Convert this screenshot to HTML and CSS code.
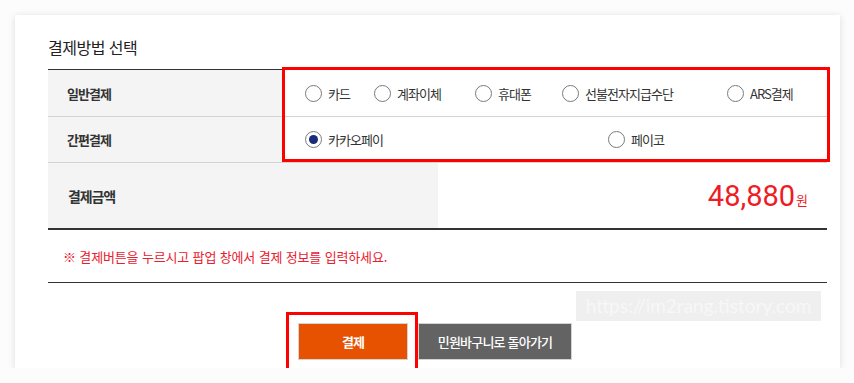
FILE: index.html
```html
<!DOCTYPE html>
<html lang="ko">
<head>
<meta charset="utf-8">
<title>결제방법 선택</title>
<link rel="stylesheet" href="styles.css">
</head>
<body>
<div class="card">
  <h2 class="title">결제방법 선택</h2>
  <div class="method">
    <div class="mrow mrow-first">
      <div class="mlabel">일반결제</div>
      <div class="mopts opts-general">
        <label class="opt"><span class="radio"></span><span class="opt-text">카드</span></label>
        <label class="opt"><span class="radio"></span><span class="opt-text">계좌이체</span></label>
        <label class="opt"><span class="radio"></span><span class="opt-text">휴대폰</span></label>
        <label class="opt"><span class="radio"></span><span class="opt-text">선불전자지급수단</span></label>
        <label class="opt"><span class="radio"></span><span class="opt-text">ARS결제</span></label>
      </div>
    </div>
    <div class="mrow">
      <div class="mlabel">간편결제</div>
      <div class="mopts opts-easy">
        <label class="opt"><span class="radio radio-on"></span><span class="opt-text">카카오페이</span></label>
        <label class="opt"><span class="radio"></span><span class="opt-text">페이코</span></label>
      </div>
    </div>
  </div>
  <div class="amount">
    <div class="alabel">결제금액</div>
    <div class="avalue"><span class="num">48,880</span><span class="won">원</span></div>
  </div>
  <p class="notice">※ 결제버튼을 누르시고 팝업 창에서 결제 정보를 입력하세요.</p>
  <div class="actions">
    <button class="btn btn-pay">결제</button>
    <button class="btn btn-back">민원바구니로 돌아가기</button>
  </div>
  <div class="watermark">https://im2rang.tistory.com</div>
  <div class="mark mark-opts"></div>
  <div class="mark mark-pay"></div>
</div>
</body>
</html>
```
FILE: styles.css
```css
* { box-sizing: border-box; }
html, body { margin: 0; padding: 0; }
body {
  background: #fcfcfc;
  font-family: "Noto Sans CJK KR", "Noto Sans", sans-serif;
  color: #333;
}
.card {
  position: relative;
  margin: 15px 0 0 15px;
  width: 825px;
  height: 353px;
  padding: 21px 13px 0 33px;
  background: #fff;
  box-shadow: 0 1px 7px rgba(0, 0, 0, 0.13);
  overflow: hidden;
}
.title {
  margin: 0 0 11px;
  font-size: 16px;
  line-height: 22px;
  font-weight: 400;
  color: #222;
  letter-spacing: -0.5px;
}
.method { border-top: 1px solid #333; }
.mrow {
  display: grid;
  grid-template-columns: 235px 1fr;
  height: 46px;
  border-bottom: 1px solid #d3d3d3;
}
.mrow-first { height: 47px; }
.mlabel {
  display: flex;
  align-items: center;
  padding-left: 19px;
  background: #f4f4f4;
  font-size: 13px;
  font-weight: 700;
  letter-spacing: -1px;
  color: #333;
}
.mopts {
  display: grid;
  align-items: center;
  padding-left: 22px;
  background: #fff;
}
.opts-general { grid-template-columns: 69px 101px 87px 165px auto; }
.opts-easy { grid-template-columns: 303px auto; }
.opt {
  display: flex;
  align-items: center;
  font-size: 13px;
  letter-spacing: -0.95px;
  color: #333;
}
.radio {
  width: 17px;
  height: 17px;
  border: 1px solid #7a7a7a;
  border-radius: 50%;
  margin-right: 6px;
  flex: none;
  position: relative;
  background: #fff;
}
.radio-on::after {
  content: "";
  position: absolute;
  left: 3px;
  top: 3px;
  width: 9px;
  height: 9px;
  border-radius: 50%;
  background: #1c2a7a;
}
.amount {
  display: grid;
  grid-template-columns: 390px 1fr;
  height: 67px;
  border-bottom: 2px solid #333;
}
.alabel {
  display: flex;
  align-items: center;
  padding-left: 20px;
  background: #f4f4f4;
  font-size: 14px;
  font-weight: 700;
  letter-spacing: -1.1px;
  color: #333;
}
.avalue {
  display: flex;
  align-items: center;
  justify-content: flex-end;
  padding-right: 19px;
  color: #ee1c25;
}
.num {
  font-family: Roboto, "Noto Sans", sans-serif;
  font-size: 29px;
  letter-spacing: 0;
}
.won {
  font-size: 13px;
  margin-left: 1px;
  margin-top: 7px;
}
.notice {
  margin: 0;
  height: 53px;
  display: flex;
  align-items: center;
  padding-left: 15px;
  border-bottom: 1px solid #333;
  font-size: 13px;
  letter-spacing: -0.15px;
  color: #e8202e;
}
.actions {
  display: flex;
  justify-content: center;
  gap: 10px;
  margin-top: 40px;
  padding-right: 5px;
}
.btn {
  height: 37px;
  border: 1px solid #d3d3d3;
  font-family: "Noto Sans CJK KR", "Noto Sans", sans-serif;
  font-size: 13px;
  font-weight: 700;
  color: #fff;
  padding: 0;
}
.btn-pay { width: 110px; background: #e65200; letter-spacing: -1px; }
.btn-back { width: 154px; background: #636363; letter-spacing: -0.8px; font-weight: 500; }
.watermark {
  position: absolute;
  left: 561px;
  top: 276px;
  width: 245px;
  height: 30px;
  background: #efefef;
  color: #f7f7f7;
  font-family: Lato, "Open Sans", sans-serif;
  font-size: 19px;
  line-height: 30px;
  text-align: center;
  white-space: nowrap;
  overflow: hidden;
}
.mark {
  position: absolute;
  border: 3px solid #ff0000;
}
.mark-opts { left: 267px; top: 52px; width: 548px; height: 95px; }
.mark-pay { left: 271px; top: 297px; width: 132px; height: 80px; }
```
